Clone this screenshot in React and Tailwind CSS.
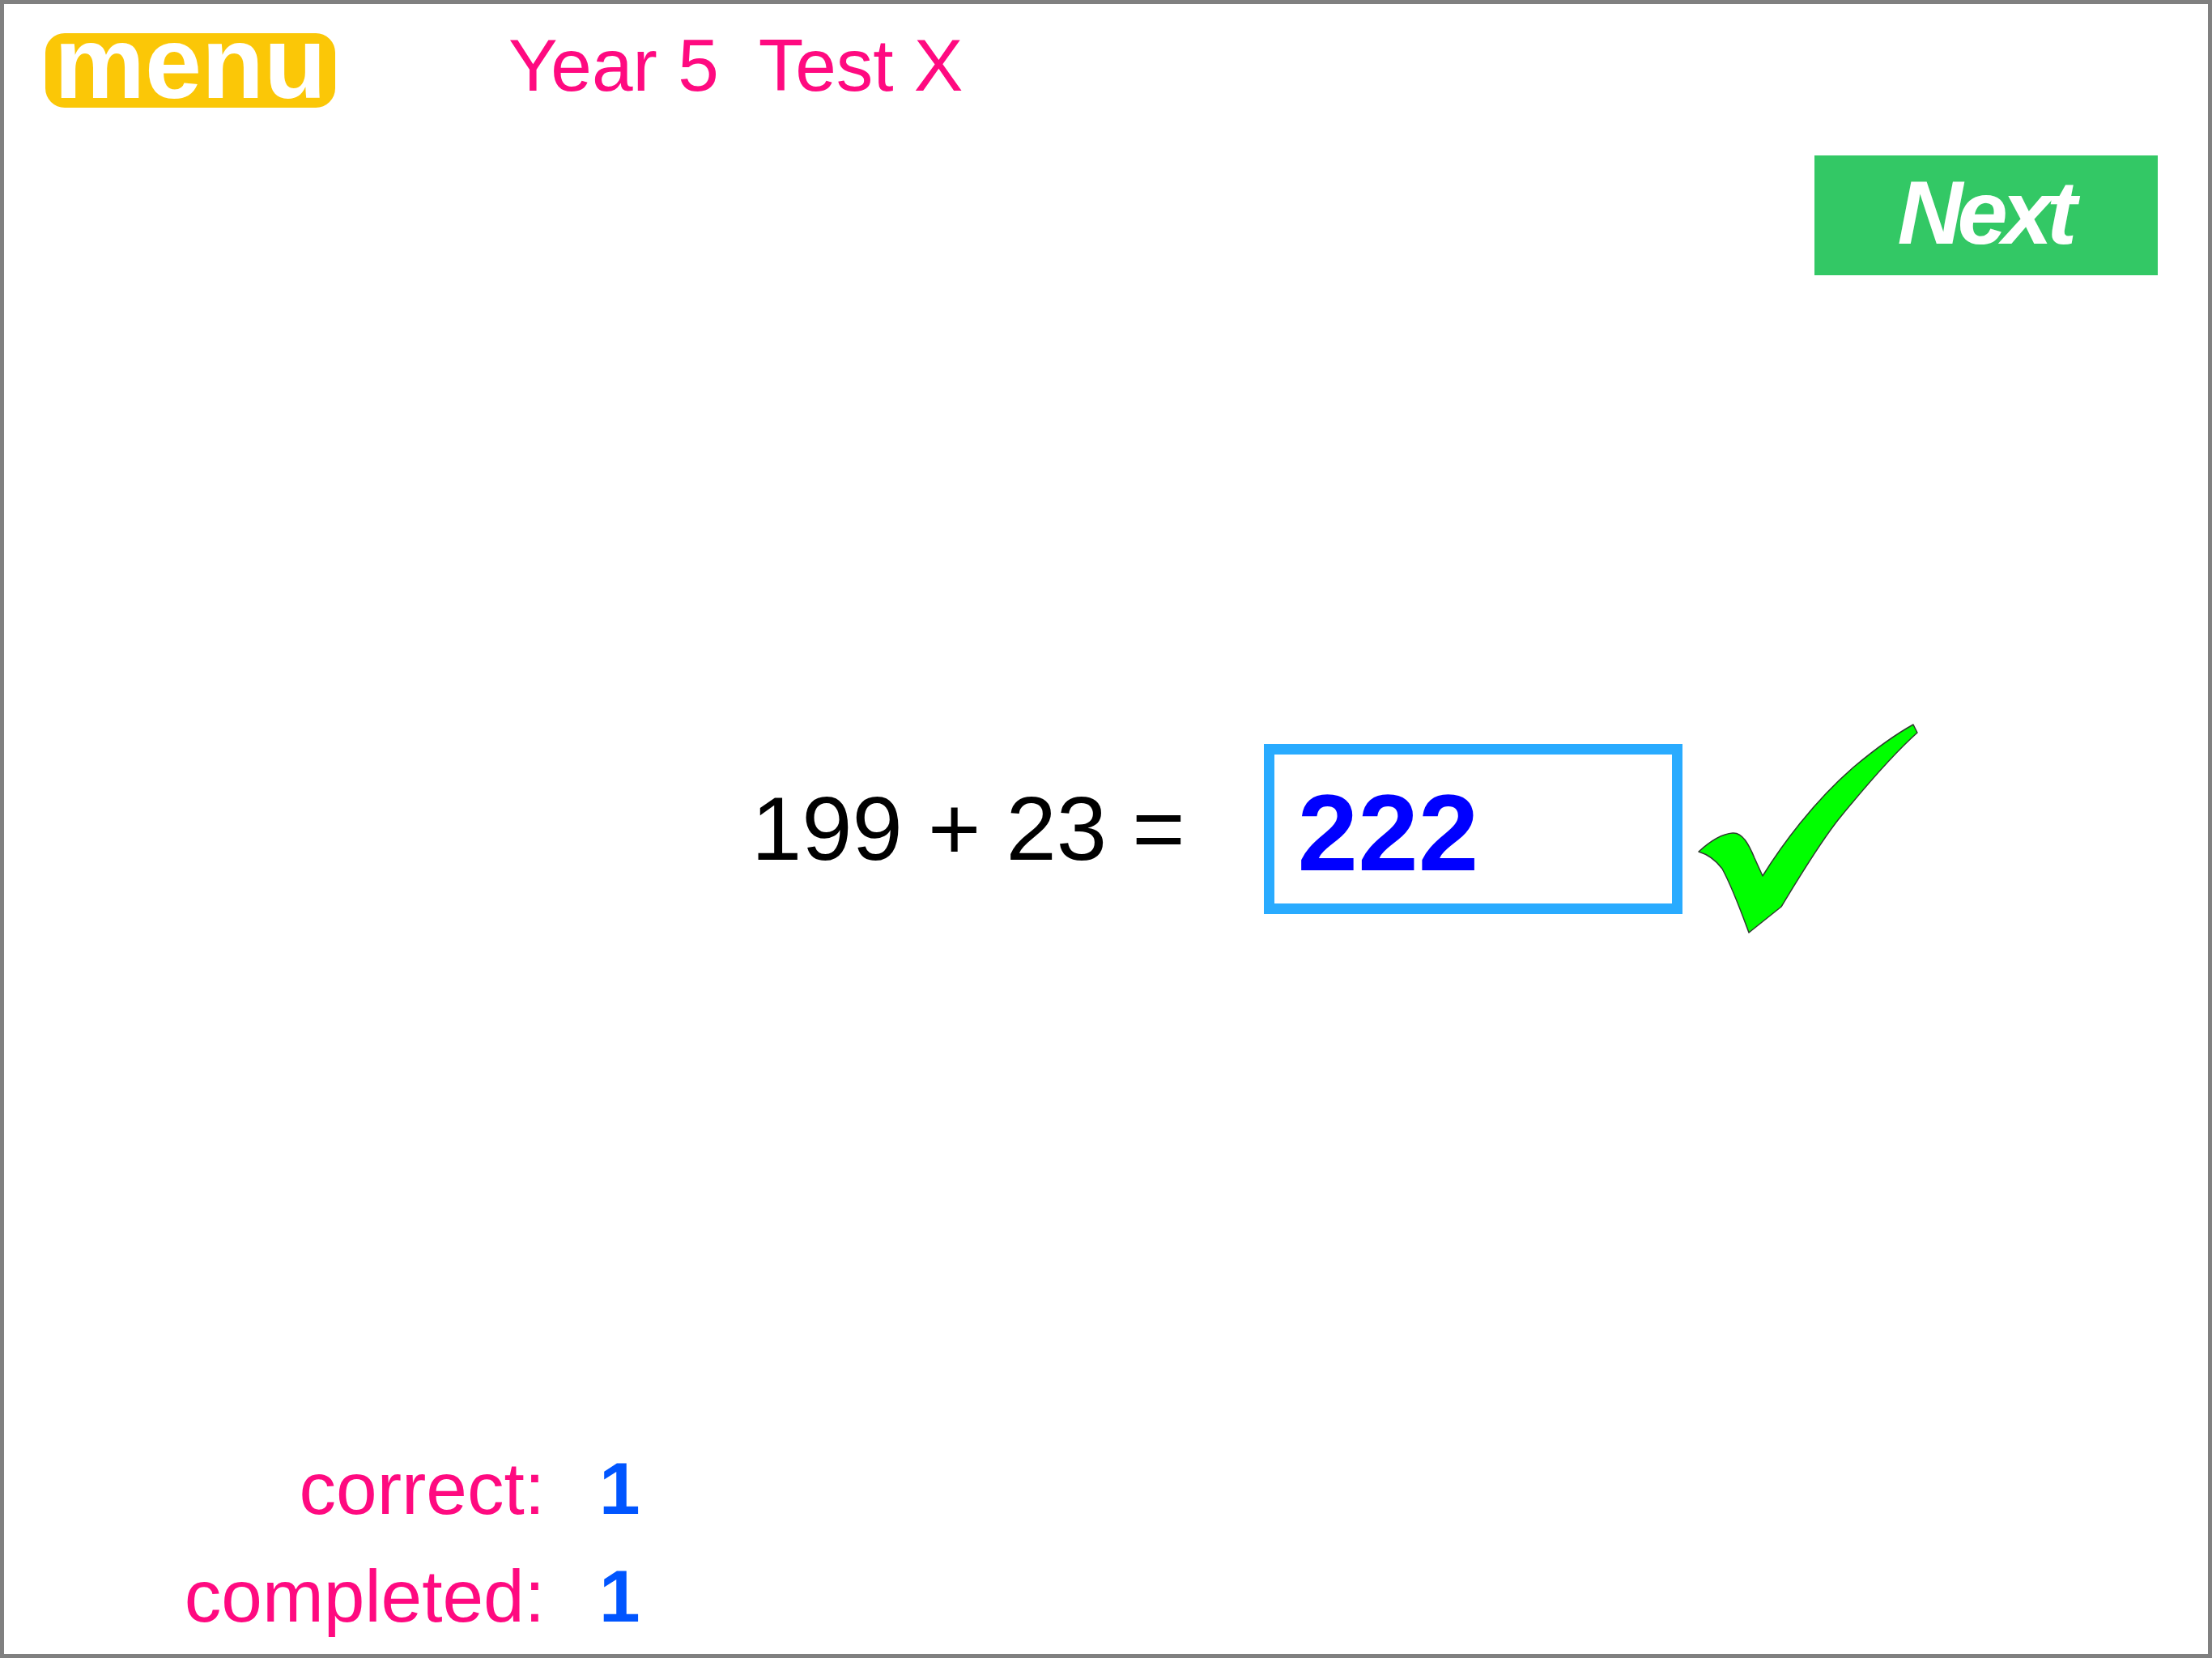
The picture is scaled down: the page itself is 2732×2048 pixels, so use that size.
import React from "react";

// Tick shown after a correct answer
function Tick() {
  return (
    <svg width="290" height="278" viewBox="0 0 290 278" className="ml-[12px] shrink-0">
      <path
        d="M8 167 C 20 156, 35 145, 50 144 C 62 143, 70 158, 77 175 L 87 197 C 110 160, 150 105, 200 62 C 230 37, 255 20, 273 10 L 278 20 C 250 45, 215 85, 180 128 C 155 160, 130 202, 110 235 L 70 267 C 60 240, 50 212, 37 188 C 28 176, 18 170, 8 167 Z"
        fill="#00ff00"
        stroke="#2f3a2f"
        strokeWidth="1.5"
        strokeLinejoin="round"
      />
    </svg>
  );
}

export default function App() {
  const correct = 1;
  const completed = 1;

  return (
    <div className="w-[2732px] h-[2048px] border-[5px] border-[#808080] bg-white flex flex-col font-['Liberation_Sans',Arial,sans-serif]">
      {/* header */}
      <div className="flex items-start pl-[51px] pt-[36px]">
        <button className="w-[358px] h-[92px] rounded-[24px] bg-[#fbc707] flex items-center justify-center pb-[18px]">
          <span className="text-white font-bold text-[126px] leading-none">menu</span>
        </button>
        <div className="ml-[214px] -mt-[6px] text-[91px] leading-none text-[#ff0a80] whitespace-pre">
          Year 5  Test X
        </div>
      </div>

      <div className="flex justify-end pr-[62px] mt-[59px]">
        <button className="w-[424px] h-[148px] bg-[#33c865] flex items-center justify-center pb-[6px]">
          <span className="text-white font-bold italic text-[112px] leading-none tracking-[-7px] pr-[4px]">Next</span>
        </button>
      </div>

      {/* question */}
      <div className="flex items-center pl-[923px] mt-[545px]">
        <div className="text-[112px] leading-none text-black whitespace-pre">199 + 23 =</div>
        <div className="ml-[97px] w-[517px] h-[210px] border-[13px] border-[#29abff] flex items-center pl-[29px] pt-[10px] shrink-0">
          <span className="text-[134px] font-bold leading-none text-[#0000ff]">222</span>
        </div>
        <Tick />
      </div>

      {/* score */}
      <div className="mt-auto pb-[5px] grid grid-cols-[668px_auto] gap-x-[67px] text-[91px] leading-[133px]">
        <div className="text-right text-[#ff0a80]">correct:</div>
        <div className="font-bold text-[#0055ff]">{correct}</div>
        <div className="text-right text-[#ff0a80]">completed:</div>
        <div className="font-bold text-[#0055ff]">{completed}</div>
      </div>
    </div>
  );
}
